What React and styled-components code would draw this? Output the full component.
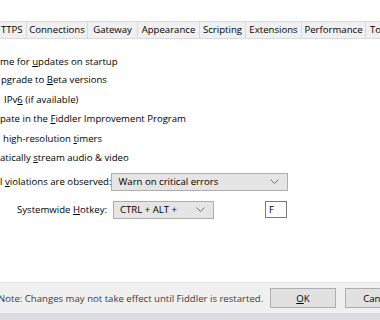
import React from "react";
import styled, { createGlobalStyle } from "styled-components";

const GlobalStyle = createGlobalStyle`
  html, body {
    margin: 0;
    padding: 0;
    background: #fff;
  }
  body {
    font-family: "Open Sans", "Noto Sans", sans-serif;
    font-size: 9.6px;
    color: #000;
  }
`;

const Window = styled.div`
  width: 380px;
  height: 320px;
  overflow: hidden;
  display: flex;
  flex-direction: column;
  background: #fff;
`;

const TabStrip = styled.div`
  margin-top: 21px;
  height: 16px;
  display: flex;
  background: #f0f0f0;
  border-top: 1px solid #dadada;
  border-bottom: 1px solid #dadada;
  white-space: nowrap;
`;

const Tab = styled.div`
  flex: none;
  width: ${p => p.w}px;
  display: flex;
  align-items: center;
  justify-content: ${p => (p.pad !== undefined ? "flex-start" : "center")};
  padding-left: ${p => p.pad || 0}px;
  box-sizing: border-box;
  border-right: 1px solid #dadada;
  line-height: 16px;
  overflow: hidden;
`;

const Body = styled.div`
  flex: 1;
  display: flex;
  flex-direction: column;
  padding-top: 14px;
`;

const CheckRow = styled.div`
  height: ${p => p.h || 19.5}px;
  line-height: ${p => p.h || 19.5}px;
  padding-left: ${p => p.indent}px;
  white-space: nowrap;
`;

const Key = styled.span`
  text-decoration: underline;
  text-underline-offset: 1px;
`;

const FieldRow = styled.div`
  display: flex;
  align-items: center;
  height: ${p => p.h}px;
  margin-top: ${p => p.top || 0}px;
  padding-left: ${p => p.indent || 0}px;
  white-space: nowrap;
`;

const Label = styled.span`
  flex: none;
  margin-right: ${p => p.gap}px;
`;

const Combo = styled.div`
  flex: none;
  width: ${p => p.w}px;
  height: 18px;
  box-sizing: border-box;
  display: flex;
  align-items: center;
  justify-content: space-between;
  padding: 0 8px 0 6px;
  background: #e5e5e5;
  border: 1px solid #adadad;
`;

const TextBox = styled.div`
  flex: none;
  width: 22px;
  height: 17px;
  box-sizing: border-box;
  margin-left: ${p => p.left}px;
  padding-left: 3px;
  line-height: 15px;
  background: #fff;
  border: 1px solid #7a7a7a;
`;

const Footer = styled.div`
  height: 30px;
  display: flex;
  align-items: center;
  background: #f0f0f0;
  border-top: 1px solid #e3e3e3;
  border-bottom: 7px solid #d9dce1;
  white-space: nowrap;
`;

const Note = styled.span`
  flex: none;
  width: 272px;
  margin-left: -2px;
  color: #3c3c3c;
`;

const Button = styled.div`
  flex: none;
  width: 66px;
  height: 20px;
  margin-left: ${p => p.left || 0}px;
  box-sizing: border-box;
  display: flex;
  align-items: center;
  justify-content: center;
  background: #e1e1e1;
  border: 1px solid #adadad;
`;

const Chevron = () => (
  <svg width="9" height="5" viewBox="0 0 9 5">
    <path d="M0.5 0.5 L4.5 4.5 L8.5 0.5" fill="none" stroke="#707070" strokeWidth="1" />
  </svg>
);

export default function App() {
  return (
    <Window>
      <GlobalStyle />
      <TabStrip>
        <Tab w={27} pad={1}>TTPS</Tab>
        <Tab w={61}>Connections</Tab>
        <Tab w={50}>Gateway</Tab>
        <Tab w={62}>Appearance</Tab>
        <Tab w={46}>Scripting</Tab>
        <Tab w={56}>Extensions</Tab>
        <Tab w={64}>Performance</Tab>
        <Tab w={40} pad={4}>Tools</Tab>
      </TabStrip>
      <Body>
        <CheckRow indent={0} h={17}>
          me for <Key>u</Key>pdates on startup
        </CheckRow>
        <CheckRow indent={1}>
          pgrade to <Key>B</Key>eta versions
        </CheckRow>
        <CheckRow indent={4}>
          IPv<Key>6</Key> (if available)
        </CheckRow>
        <CheckRow indent={0}>
          pate in the <Key>F</Key>iddler Improvement Program
        </CheckRow>
        <CheckRow indent={3}>
          high-resolution <Key>t</Key>imers
        </CheckRow>
        <CheckRow indent={0}>
          atically <Key>s</Key>tream audio &amp; video
        </CheckRow>
        <FieldRow h={18} top={5}>
          <Label gap={0}>
            l <Key>v</Key>iolations are observed:
          </Label>
          <Combo w={177}>
            <span>Warn on critical errors</span>
            <Chevron />
          </Combo>
        </FieldRow>
        <FieldRow h={18} top={10} indent={17}>
          <Label gap={6}>
            Systemwide <Key>H</Key>otkey:
          </Label>
          <Combo w={101}>
            <span>CTRL + ALT +</span>
            <Chevron />
          </Combo>
          <TextBox left={51}>F</TextBox>
        </FieldRow>
      </Body>
      <Footer>
        <Note>Note: Changes may not take effect until Fiddler is restarted.</Note>
        <Button>
          <span>
            <Key>O</Key>K
          </span>
        </Button>
        <Button left={9}>Cancel</Button>
      </Footer>
    </Window>
  );
}
